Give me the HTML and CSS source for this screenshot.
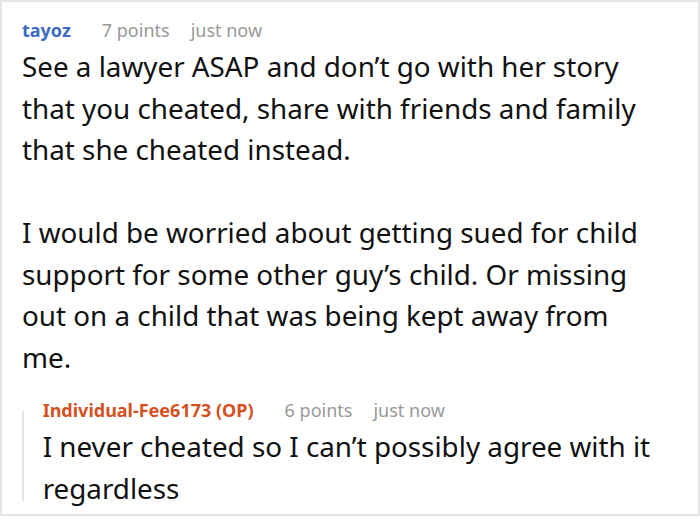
FILE: index.html
```html
<!DOCTYPE html>
<html lang="en">
<head>
    <meta charset="UTF-8">
    <meta name="viewport" content="width=device-width, initial-scale=1.0">
    <title>Comments</title>
    <link rel="stylesheet" href="styles.css">
</head>
<body>
    <div class="thread">
        <div class="comment">
            <div class="meta">
                <span class="author">tayoz</span>
                <span class="info">7 points</span>
                <span class="info">just now</span>
            </div>
            <div class="text">
                <p>See a lawyer ASAP and don’t go with her story that you cheated, share with friends and family that she cheated instead.</p>
                <p>I would be worried about getting sued for child support for some other guy’s child. Or missing out on a child that was being kept away from me.</p>
            </div>
            <div class="reply">
                <div class="bar"></div>
                <div class="reply-body">
                    <div class="meta">
                        <span class="author op">Individual-Fee6173 (OP)</span>
                        <span class="info">6 points</span>
                        <span class="info">just now</span>
                    </div>
                    <div class="text">
                        <p>I never cheated so I can’t possibly agree with it regardless</p>
                    </div>
                </div>
            </div>
        </div>
    </div>
</body>
</html>
```

FILE: styles.css
```css
body {
    margin: 0;
    font-family: 'Noto Sans', sans-serif;
    background-color: #fff;
}
.thread {
    width: 700px;
    height: 516px;
    box-sizing: border-box;
    border: 2px solid #e6e6e6;
    overflow: hidden;
}
.comment {
    padding: 16px 40px 0 20px;
}
.meta {
    display: flex;
    gap: 21px;
    font-size: 18px;
    line-height: 24px;
    margin-bottom: 4px;
}
.author {
    font-weight: bold;
    color: #3c6cbf;
    margin-right: 10px;
}
.author.op {
    color: #d4511f;
}
.info {
    color: #999;
}
.text {
    font-size: 27.8px;
    line-height: 41.5px;
    color: #111;
}
.text p {
    margin: 0 0 41.5px 0;
}
.text p:last-child {
    margin-bottom: 0;
}
.reply {
    display: flex;
    margin-top: 20px;
}
.bar {
    width: 2px;
    margin: 13px 0 0 0;
    height: 90px;
    background-color: #e6e6e6;
}
.reply-body {
    padding-left: 19px;
}
```
